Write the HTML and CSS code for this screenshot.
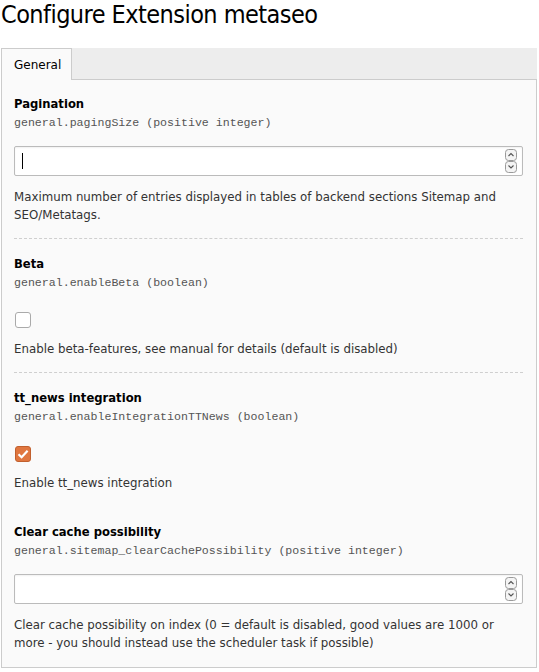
FILE: index.html
```html
<!DOCTYPE html>
<html>
<head>
<meta charset="utf-8">
<link rel="stylesheet" href="styles.css">
</head>
<body>
<div class="page">
  <h1 class="title">Configure Extension metaseo</h1>
  <div class="tabs">
    <div class="tab">General</div>
  </div>
  <div class="panel">
    <div class="field">
      <div class="label">Pagination</div>
      <div class="key">general.pagingSize (positive integer)</div>
      <div class="input"><span class="caret"></span>
        <svg class="spin" width="13" height="25" viewBox="0 0 13 25"><rect x="0.5" y="0.5" width="11" height="11" rx="3" fill="#f4f4f4" stroke="#9a9a9a"/><path d="M3.5 7 L6 4.5 L8.5 7" fill="none" stroke="#555" stroke-width="1.1"/><rect x="0.5" y="12.5" width="11" height="11" rx="3" fill="#f4f4f4" stroke="#9a9a9a"/><path d="M3.5 16.5 L6 19 L8.5 16.5" fill="none" stroke="#555" stroke-width="1.1"/></svg>
      </div>
      <div class="desc">Maximum number of entries displayed in tables of backend sections Sitemap and SEO/Metatags.</div>
    </div>
    <div class="field sep">
      <div class="label">Beta</div>
      <div class="key">general.enableBeta (boolean)</div>
      <div class="check"></div>
      <div class="desc">Enable beta-features, see manual for details (default is disabled)</div>
    </div>
    <div class="field sep">
      <div class="label">tt_news integration</div>
      <div class="key">general.enableIntegrationTTNews (boolean)</div>
      <div class="check on"><svg width="16" height="16" viewBox="0 0 16 16"><path d="M3.5 8.2 L6.6 11.2 L12.6 4.8" fill="none" stroke="#fff" stroke-width="2.2"/></svg></div>
      <div class="desc">Enable tt_news integration</div>
    </div>
    <div class="field nosep">
      <div class="label">Clear cache possibility</div>
      <div class="key">general.sitemap_clearCachePossibility (positive integer)</div>
      <div class="input">
        <svg class="spin" width="13" height="25" viewBox="0 0 13 25"><rect x="0.5" y="0.5" width="11" height="11" rx="3" fill="#f4f4f4" stroke="#9a9a9a"/><path d="M3.5 7 L6 4.5 L8.5 7" fill="none" stroke="#555" stroke-width="1.1"/><rect x="0.5" y="12.5" width="11" height="11" rx="3" fill="#f4f4f4" stroke="#9a9a9a"/><path d="M3.5 16.5 L6 19 L8.5 16.5" fill="none" stroke="#555" stroke-width="1.1"/></svg>
      </div>
      <div class="desc">Clear cache possibility on index (0 = default is disabled, good values are 1000 or more - you should instead use the scheduler task if possible)</div>
    </div>
  </div>
</div>
</body>
</html>
```

FILE: styles.css
```css
html, body {
  margin: 0;
  padding: 0;
  background: #fff;
}
.page {
  width: 536px;
  margin-left: 1px;
  font-family: "DejaVu Sans", Verdana, sans-serif;
  font-size: 12px;
  color: #333;
}
.title {
  margin: 0;
  height: 48px;
  font-family: "DejaVu Sans Condensed", "DejaVu Sans", sans-serif;
  font-weight: normal;
  font-size: 25px;
  letter-spacing: -0.55px;
  line-height: 30px;
  color: #000;
}
.tabs {
  display: flex;
  height: 31px;
  background: #ededed;
  border-bottom: 1px solid #cccccc;
}
.tab {
  width: 71px;
  box-sizing: border-box;
  margin-bottom: -1px;
  height: 32px;
  border: 1px solid #cccccc;
  border-bottom: none;
  background: #fafafa;
  padding-left: 12px;
  line-height: 32px;
  font-size: 12px;
  color: #000;
}
.panel {
  background: #fafafa;
  border: 1px solid #cccccc;
  border-top: none;
  padding: 15px 13px 15px 12px;
}
.field {
  padding-bottom: 14px;
}
.field.sep {
  border-top: 1px dashed #cfcfcf;
  padding-top: 16px;
}
.field.nosep {
  border-top: 1px solid transparent;
  padding-top: 16px;
  padding-bottom: 0;
}
.label {
  font-weight: bold;
  font-size: 11.6px;
  line-height: 18px;
  color: #000;
}
.key {
  margin-top: 1px;
  font-family: "Liberation Mono", "Courier New", monospace;
  font-size: 11.6px;
  line-height: 18px;
  color: #555;
}
.input {
  margin-top: 14px;
  height: 30px;
  box-sizing: border-box;
  border: 1px solid #bbbbbb;
  border-radius: 2px;
  background: #fff;
  box-shadow: inset 0 1px 2px rgba(0,0,0,0.06);
  display: flex;
  align-items: center;
  justify-content: space-between;
  padding: 0 4px 0 7px;
}
.caret {
  width: 1px;
  height: 16px;
  background: #000;
}
.spin {
  margin-left: auto;
  display: block;
}
.desc {
  margin-top: 12px;
  line-height: 18px;
  font-size: 11.8px;
  color: #333;
}
.check {
  margin-top: 20px;
  margin-left: 1px;
  width: 16px;
  height: 16px;
  box-sizing: border-box;
  border: 1px solid #aaaaaa;
  border-radius: 3px;
  background: #fff;
}
.check + .desc {
  margin-top: 12px;
}
.check.on {
  background: #e0763f;
  border-color: #c1602e;
  position: relative;
}
.check.on svg {
  position: absolute;
  left: -1px;
  top: -1px;
}
```
